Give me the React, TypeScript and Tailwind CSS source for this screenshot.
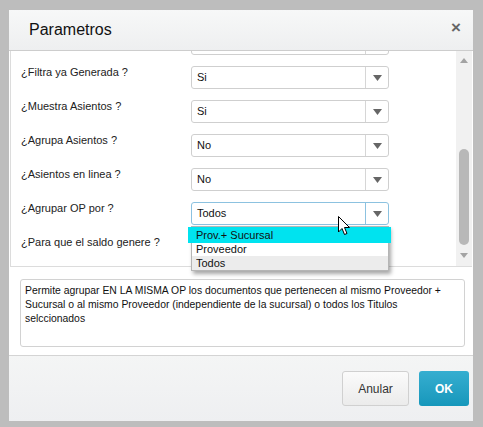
import React from 'react';

const font = { fontFamily: '"Liberation Sans", Arial, sans-serif' };

type Row = { label: string; value?: string; focused?: boolean };

const rows: Row[] = [
  { label: '', value: '' },
  { label: '¿Filtra ya Generada ?', value: 'Si' },
  { label: '¿Muestra Asientos ?', value: 'Si' },
  { label: '¿Agrupa Asientos ?', value: 'No' },
  { label: '¿Asientos en linea ?', value: 'No' },
  { label: '¿Agrupar OP por ?', value: 'Todos', focused: true },
  { label: '¿Para que el saldo genere ?', value: '' },
];

function Caret({ color = '#666' }: { color?: string }) {
  return (
    <svg width="9" height="6" viewBox="0 0 9 6">
      <path d="M0 0 L9 0 L4.5 6 Z" fill={color} />
    </svg>
  );
}

function Select({ value, focused }: { value?: string; focused?: boolean }) {
  return (
    <div
      className={`flex h-[23px] w-[198px] items-stretch rounded-[3px] border bg-white ${
        focused ? 'border-[#8cc2e0]' : 'border-[#cfcfcf]'
      }`}
    >
      <div className="flex flex-1 items-center pl-[5px] text-[11px] text-[#111]">{value}</div>
      <div className={`flex w-[23px] items-center justify-center border-l ${focused ? 'border-[#8cc2e0]' : 'border-[#d6d6d6]'}`}>
        <Caret />
      </div>
    </div>
  );
}

export default function App() {
  return (
    <div className="h-[427px] w-[483px] bg-[#bdbdbd] pb-[6px] pl-[9px] pr-[10px] pt-[10px]" style={font}>
      <div className="relative flex h-full flex-col bg-white">
        <div className="flex h-[41px] items-center justify-between border-b border-[#cdcdcd] bg-gradient-to-b from-[#f7f8f8] to-[#eeeff0] pl-[20px] pr-[12px]">
          <span className="text-[16px] text-[#111]">Parametros</span>
          <span className="mb-[6px] text-[17px] font-bold leading-none text-[#666]">×</span>
        </div>

        <div className="mx-[1px] flex h-[216px] border-b border-l border-[#dcdcdc]">
          <div className="flex-1 overflow-hidden">
            <div className="-mt-[19px] flex flex-col gap-[11px] pl-[10px]">
              {rows.map((r, i) => (
                <div key={i} className="flex items-start">
                  <div className="w-[170px] text-[11px] leading-[13px] text-[#222]">{r.label}</div>
                  {i < rows.length - 1 ? <Select value={r.value} focused={r.focused} /> : <div className="h-[23px]" />}
                </div>
              ))}
            </div>
          </div>
          <div className="flex w-[16px] flex-col items-center bg-[#f1f1f1]">
            <div className="mt-[7px]">
              <svg width="8" height="5" viewBox="0 0 8 5">
                <path d="M0 5 L8 5 L4 0 Z" fill="#a3a3a3" />
              </svg>
            </div>
            <div className="mt-[86px] h-[96px] w-[10px] rounded-full bg-[#b8b8b8]" />
            <div className="mt-[8px]">
              <svg width="8" height="5" viewBox="0 0 8 5">
                <path d="M0 0 L8 0 L4 5 Z" fill="#a3a3a3" />
              </svg>
            </div>
          </div>
        </div>

        <div className="px-[11px] pb-[8px] pt-[12px]">
          <div className="h-[68px] w-[445px] rounded-[3px] border border-[#d2d2d2] px-[4px] pt-[4px] text-[10.4px] leading-[14px] text-[#111]">
            Permite agrupar EN LA MISMA OP los documentos que pertenecen al mismo Proveedor + Sucursal o al mismo Proveedor (independiente de la sucursal) o todos los Titulos selccionados
          </div>
        </div>

        <div className="flex flex-1 items-start justify-end gap-[10px] border-t border-[#d4d4d4] bg-gradient-to-b from-[#f4f5f5] to-[#eeeff1] pr-[4px] pt-[15px]">
          <button className="h-[35px] w-[67px] rounded-[3px] border border-[#d0d0d0] bg-gradient-to-b from-[#fbfbfb] to-[#ebebeb] text-[12px] text-[#333]">
            Anular
          </button>
          <button className="h-[35px] w-[50px] rounded-[3px] bg-gradient-to-b from-[#35aed0] to-[#1597bb] text-[12px] font-bold text-white">
            OK
          </button>
        </div>

        <div className="absolute left-[182px] top-[216px] w-[198px] border border-[#b5b5b5] bg-white text-[11px] leading-[14px] text-[#111] shadow-[2px_3px_4px_rgba(0,0,0,0.35)]">
          <div className="-ml-[4px] -mr-[3px] h-[16px] bg-[#00e3ef] pl-[8px] leading-[16px]">Prov.+ Sucursal</div>
          <div className="h-[13px] pl-[4px] leading-[13px]">Proveedor</div>
          <div className="h-[14px] bg-[#ececec] pl-[4px] leading-[14px]">Todos</div>
        </div>

        <div className="absolute left-[329px] top-[206px]">
          <svg width="13" height="20" viewBox="0 0 13 20">
            <path d="M0.5 0.5 L0.5 16 L4 12.5 L6.5 18.5 L9 17.5 L6.5 11.5 L11.5 11.5 Z" fill="white" stroke="black" strokeWidth="1" strokeLinejoin="round" />
          </svg>
        </div>
      </div>
    </div>
  );
}
